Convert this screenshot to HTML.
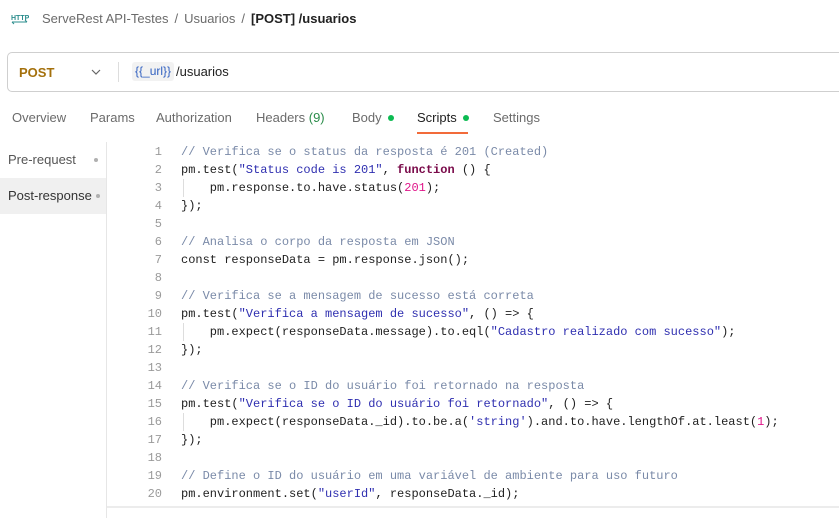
<!DOCTYPE html>
<html><head><meta charset="utf-8"><style>
*{margin:0;padding:0;box-sizing:border-box}
body{width:839px;height:518px;overflow:hidden;background:#fff;font-family:"Liberation Sans",sans-serif;font-size:13px;color:#212121;position:relative}
.abs{position:absolute;white-space:nowrap}
.crumb{top:11px;left:42px;font-size:13px;color:#6b6b6b}
.crumb b{color:#212121;font-weight:bold}
.url{left:7px;top:52px;width:850px;height:40px;border:1px solid #cfcfcf;border-radius:5px}
.tab{top:110px;font-size:13px;color:#6b6b6b}
.dot{display:inline-block;width:6px;height:6px;border-radius:50%;background:#0cbb52;margin-left:6px;vertical-align:1px}
.code{left:120px;top:143px;font-family:"Liberation Mono",monospace;font-size:12px;line-height:18px;color:#212121}
.ln{display:inline-block;width:42px;text-align:right;color:#9a9a9a;margin-right:19px}
.c{color:#7a8aa8}.s{color:#2f2fb0}.k{color:#7a0a4a;font-weight:bold}.n{color:#e0168a}
</style></head><body>
<svg class="abs" style="left:11px;top:12px" width="18" height="14" viewBox="0 0 18 14"><text x="0" y="8" font-family="Liberation Sans" font-size="7" font-weight="bold" fill="#2a8c8c">HTTP</text><path d="M1 10h15M1 10l2 2M16 10l-2-2" stroke="#2a8c8c" fill="none" stroke-width="1"/></svg>
<div class="abs crumb">ServeRest API-Testes<span style="margin:0 6px">/</span>Usuarios<span style="margin:0 6px">/</span><b>[POST] /usuarios</b></div>
<div class="abs url"></div>
<div class="abs" style="left:19px;top:65px;font-weight:bold;color:#a4700c;font-size:13px">POST</div>
<svg class="abs" style="left:91px;top:68px" width="10" height="8"><path d="M1 2l4 4 4-4" stroke="#666" fill="none" stroke-width="1.2"/></svg>
<div class="abs" style="left:118px;top:62px;width:1px;height:20px;background:#ddd"></div>
<div class="abs" style="left:132px;top:62px;height:19px;padding:2px 3px;background:#f2f2f2;border-radius:3px;color:#2f5fc0;font-size:12px">{{_url}}</div>
<div class="abs" style="left:176px;top:64px;font-size:13px">/usuarios</div>
<div class="abs tab" style="left:12px">Overview</div>
<div class="abs tab" style="left:90px">Params</div>
<div class="abs tab" style="left:156px">Authorization</div>
<div class="abs tab" style="left:256px">Headers <span style="color:#2a8c4a">(9)</span></div>
<div class="abs tab" style="left:352px">Body<span class="dot"></span></div>
<div class="abs tab" style="left:417px;color:#212121">Scripts<span class="dot"></span></div>
<div class="abs" style="left:417px;top:132px;width:51px;height:2px;background:#f26b3a"></div>
<div class="abs tab" style="left:493px">Settings</div>
<div class="abs" style="left:106px;top:142px;width:1px;height:376px;background:#e6e6e6"></div>
<div class="abs" style="left:8px;top:152px;color:#555">Pre-request</div>
<div class="abs" style="left:94px;top:158px;width:4px;height:4px;border-radius:50%;background:#b0b0b0"></div>
<div class="abs" style="left:0;top:178px;width:106px;height:36px;background:#f0f0f0"></div>
<div class="abs" style="left:8px;top:188px;color:#333">Post-response</div>
<div class="abs" style="left:96px;top:194px;width:4px;height:4px;border-radius:50%;background:#b0b0b0"></div>
<div class="abs" style="left:183px;top:179px;width:1px;height:18px;background:#ddd"></div>
<div class="abs" style="left:183px;top:323px;width:1px;height:18px;background:#ddd"></div>
<div class="abs" style="left:183px;top:413px;width:1px;height:18px;background:#ddd"></div>
<div class="abs code"><pre style="font:inherit">
<span class="ln">1</span><span class="c">// Verifica se o status da resposta é 201 (Created)</span>
<span class="ln">2</span>pm.test(<span class="s">"Status code is 201"</span>, <span class="k">function</span> () {
<span class="ln">3</span>    pm.response.to.have.status(<span class="n">201</span>);
<span class="ln">4</span>});
<span class="ln">5</span>
<span class="ln">6</span><span class="c">// Analisa o corpo da resposta em JSON</span>
<span class="ln">7</span>const responseData = pm.response.json();
<span class="ln">8</span>
<span class="ln">9</span><span class="c">// Verifica se a mensagem de sucesso está correta</span>
<span class="ln">10</span>pm.test(<span class="s">"Verifica a mensagem de sucesso"</span>, () =&gt; {
<span class="ln">11</span>    pm.expect(responseData.message).to.eql(<span class="s">"Cadastro realizado com sucesso"</span>);
<span class="ln">12</span>});
<span class="ln">13</span>
<span class="ln">14</span><span class="c">// Verifica se o ID do usuário foi retornado na resposta</span>
<span class="ln">15</span>pm.test(<span class="s">"Verifica se o ID do usuário foi retornado"</span>, () =&gt; {
<span class="ln">16</span>    pm.expect(responseData._id).to.be.a(<span class="s">'string'</span>).and.to.have.lengthOf.at.least(<span class="n">1</span>);
<span class="ln">17</span>});
<span class="ln">18</span>
<span class="ln">19</span><span class="c">// Define o ID do usuário em uma variável de ambiente para uso futuro</span>
<span class="ln">20</span>pm.environment.set(<span class="s">"userId"</span>, responseData._id);</pre></div>
<div class="abs" style="left:107px;top:506px;width:732px;height:2px;background:#ececec"></div>
</body></html>
